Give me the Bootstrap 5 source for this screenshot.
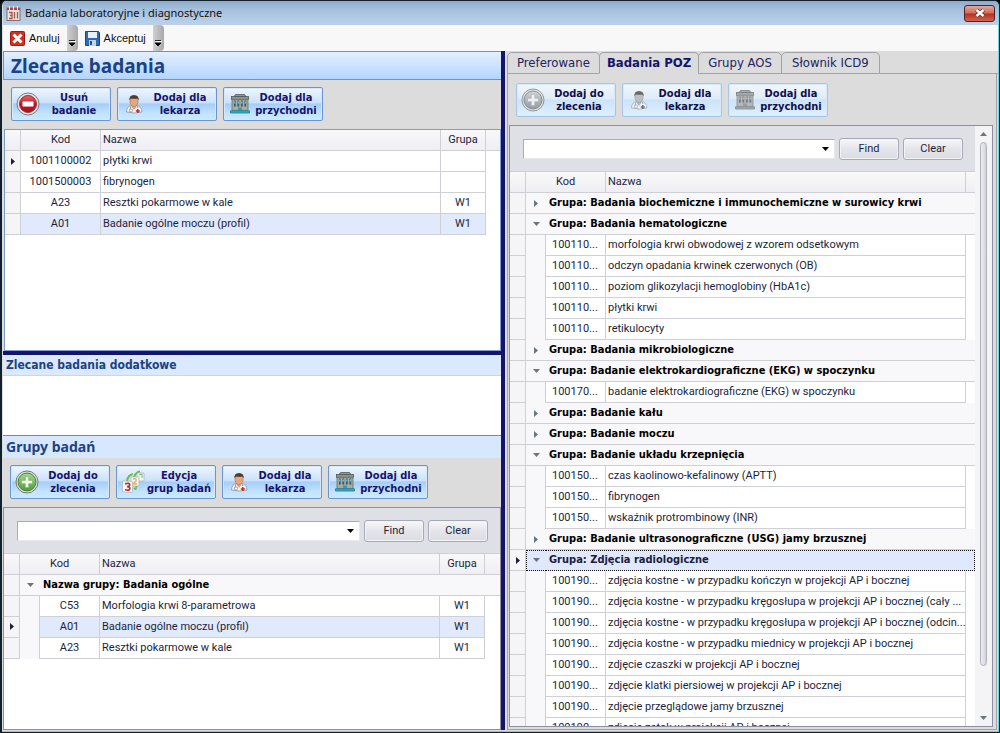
<!DOCTYPE html>
<html lang="pl">
<head>
<meta charset="utf-8">
<meta name="viewport" content="width=device-width, initial-scale=1">
<title>Badania laboratoryjne i diagnostyczne</title>
<link href="https://cdn.jsdelivr.net/npm/bootstrap@5.3.0/dist/css/bootstrap.min.css" rel="stylesheet">
<style>
:root{--navy:#14146c;--ink:#1c1f3a;--line:#cfcfd6;--bold-face:"DejaVu Sans Condensed","DejaVu Sans",sans-serif}
body{font:11px/20px Roboto,sans-serif;color:var(--ink);background:#000}
button,input{font:inherit}
.app-window{height:100vh;background:#dcdcdc;border:1px solid #10202c;border-width:1px 1px 1px 2px;border-radius:6px 6px 0 0;box-shadow:inset 0 -1px #6fd0ea,inset -1px 0 #6fd0ea;padding:0 1px 2px 1px;overflow:hidden}
.title-bar{height:24px;background:linear-gradient(#8fa9c6,#a3bedb 30%,#bcd2ea);font:11px/24px "Noto Sans",sans-serif;color:#111;padding:0 3px 0 3px}
.title-bar .ico{width:15px;height:15px}
.close-btn{width:31px;height:17px;padding:0;border:1px solid #53202a;border-radius:3px;background:linear-gradient(#e5a79c,#d0695a 48%,#b5301c 52%,#cf6551);display:flex;align-items:center;justify-content:center}
.tool-bar{height:26px;background:#f8f8f8;font:11px/26px "Liberation Sans",sans-serif}
.tool-btn{border:0;background:none;padding:0 7px 0 7px;display:flex;align-items:center;gap:4px;color:#111}
.tool-btn svg{width:15px;height:15px}
.tool-grip{width:11px;border:0;padding:0;background:linear-gradient(90deg,#d0d0d0,#a8a8a8);border-radius:0 4px 4px 0;display:flex;align-items:end;justify-content:center}
.panes{display:grid;grid-template-columns:minmax(0,498fr) 4px minmax(0,493fr);min-height:0}
.pane-col{min-height:0}
.split{background:var(--navy)}
.split-h{height:4px}
.blank-area{height:59px}
.pane-title{margin:0;color:#1b4285;font-weight:700}
.title-lg{height:29px;font:700 19px/28px "Noto Sans",sans-serif;padding-left:7px;border:1px solid #6d93cf;border-width:1px 0 1px 1px;background:linear-gradient(#e3efff,#b4d5fe)}
.title-md{height:23px;font:700 14px/22px "Noto Sans",sans-serif;padding-left:3px;background:#d7e7fd;border-top:1px solid #6b87b9}
.title-sm{height:21px;font:700 12px/20px var(--bold-face);padding-left:3px;background:#dae9fd;border-bottom:1px solid #c5d7ec}
.act-bar{display:flex;gap:6px;padding:7px 7px 8px}
.tab-body .act-bar{padding-top:9px}
.act-btn{width:100px;height:34px;display:flex;align-items:center;padding:0 2px 0 4px;border:1px solid #6a95d2;border-radius:2px;background:linear-gradient(#eef6ff,#cbe1fb 46%,#a5cdf8 50%,#c3e2ff 80%,#c9ebff);font:700 11px/13px var(--bold-face);color:var(--navy);box-shadow:inset 0 0 0 1px #d5e8fc}
.act-btn svg{width:24px;height:24px;flex:none}
.act-btn span{flex:1;text-align:center;white-space:nowrap}
.act-btn:disabled{border-color:#a9c6e6;background:linear-gradient(#f2f7fc,#dfebf7 46%,#cbe2f8 50%,#e0f1ff);color:#10104e}
.act-btn:disabled svg{filter:grayscale(1);opacity:.75}
.grid-box{flex:1 1 0;border:1px solid #8c8fa3;background:#fff;overflow:hidden;min-height:0}
.grid-blue{flex-basis:0;margin-left:1px;border-color:#7d9cd0}
.grid-low{flex-basis:4px}
.find-row{background:#dfe0e6;display:flex;align-items:center;gap:4px;padding:12px 12px 11px 13px;border-bottom:1px solid var(--line)}
.find-combo{display:flex;flex:1;min-width:0;height:20px;background:#fff;border:1px solid #a9abb8;border-right-color:#e8e8ec;border-bottom-color:#e8e8ec}
.find-combo input{flex:1;min-width:0;border:0;outline:0;padding:0 3px;background:none}
.find-combo button{border:0;background:none;width:17px;padding:0;display:flex;align-items:center;justify-content:center}
.find-btn{width:60px;height:22px;padding:0;border:1px solid #a7a9b8;border-radius:3px;background:linear-gradient(#f8f8fa,#e4e5ea 50%,#dcdde4);line-height:20px;color:var(--ink);box-shadow:inset 0 0 0 1px #f3f3f6}
.data-grid{width:100%;table-layout:fixed;border-collapse:separate;border-spacing:0}
.data-grid th,.data-grid td{height:21px;padding:0 0 0 2px;line-height:20px;vertical-align:top;border-right:1px solid var(--line);border-bottom:1px solid var(--line);white-space:nowrap;overflow:hidden}
.data-grid th{line-height:19px;font-weight:400;background:linear-gradient(#f9f9fb,#efeff3)}
.data-grid th:last-child{border-right:0}
.data-grid td:last-child:not(.grp){border:0}
.data-grid .ctr{text-align:center;padding:0}
.data-grid td:first-child{background:#f5f5f8;padding:0;text-align:center}
.data-grid .grp{border-right:0;padding-left:3px;background:#f8f8fa;font:700 11px/20px var(--bold-face);color:#000}
.data-grid .exp{background:#f8f8fa;border-right:0;padding:0;text-align:center}
.data-grid .gut{background:#f8f8fa;border-bottom:0;padding:0}
.data-grid .code{padding:0 2px 0 6px}
.data-grid svg{display:inline-block;vertical-align:middle}
.picked td:not(:first-child):not(:last-child):not(.gut){background:#e1e9fc}
.data-grid .focus-grp .exp,.data-grid .focus-grp .grp{background:#dfe8fc;border-top:1px dotted #111;border-bottom:1px dotted #111;line-height:18px;color:#20203c}
.data-grid .focus-grp .exp{border-left:1px dotted #111}
.data-grid .focus-grp .grp{border-right:1px dotted #111}
.tabs-row{border-bottom:1px solid #a2a2a8;height:22px;margin:1px 0 0 2px;padding-left:1px}
.tabs-row .tab-btn{height:22px;margin-left:-1px;padding:0 9px;border:1px solid #a2a2a8;border-radius:5px 5px 0 0;background:#dcdcdc;font:13px/20px var(--bold-face);color:#23235f;white-space:nowrap}
.tabs-row .tab-btn.active{font-weight:700;color:var(--navy);border-bottom-color:#dcdcdc;padding:0 7px}
.tabs-row .tab-btn:last-child{padding:0 10px}
.tab-body{margin:0 1px 0 2px;border:1px solid #a2a2a8;border-top:0;padding:0 3px 2px 1px;min-height:0}
.scroll-col{width:17px;background:#f4f4f7;padding:6px 0}
.scroll-thumb{width:7px;flex:1;margin:6px 0 50px;border:1px solid #b2b2bc;border-radius:4px;background:linear-gradient(90deg,#ececf0,#d2d2da)}
</style>
</head>
<body>
<svg class="position-absolute" width="0" height="0" aria-hidden="true">
  <linearGradient id="gRed" x1="0" y1="0" x2="0" y2="1"><stop offset="0" stop-color="#e8696c"/><stop offset=".5" stop-color="#c81526"/><stop offset="1" stop-color="#a80f1d"/></linearGradient>
  <linearGradient id="gGreen" x1="0" y1="0" x2="0" y2="1"><stop offset="0" stop-color="#a5d98f"/><stop offset="1" stop-color="#4e9c3d"/></linearGradient>
  <symbol id="i-minus" viewBox="0 0 24 24"><circle cx="12" cy="12" r="11" fill="#e8e8ea" stroke="#77777c"/><circle cx="12" cy="12" r="8.500" fill="url(#gRed)" stroke="#8b3038"/><rect x="6.500" y="9.500" width="11" height="5" rx="1" fill="#fff" stroke="#d9a0a4" stroke-width=".6"/></symbol>
  <symbol id="i-plus" viewBox="0 0 24 24"><circle cx="12" cy="12" r="11" fill="#e4e8e0" stroke="#6d7a68"/><circle cx="12" cy="12" r="9" fill="url(#gGreen)" stroke="#4a7a40"/><path d="M10.300 6.500h3.400v3.800h3.800v3.400h-3.800v3.800h-3.400v-3.800H6.500v-3.400h3.800z" fill="#eef8e8" stroke="#7cb06c" stroke-width=".7"/></symbol>
  <symbol id="i-doctor" viewBox="0 0 24 24"><path d="M4.500 20c0-4 2-6 5-6.500h5c3 .5 5.500 2.500 5.500 6.500q-7.500 2-15.500 0z" fill="#f4f6f8" stroke="#8b939c" stroke-width=".8"/><path d="M9.500 12.500h5l-.5 3-2 2.500-2-2.500z" fill="#e2a377"/><path d="M8 6h8V10.500q-.9 4-4 4.200Q8.800 14.500 8 10.500z" fill="#e8a87c" stroke="#9c6a48" stroke-width=".5"/><path d="M7.500 8.500q-.8-5.300 4.500-5.600 5.300.3 4.600 5.600l-1.200-2q-3.200.6-6.600 0z" fill="#4a3c36"/><path d="M9 14l-1.500 5.500M15 14l1 2" stroke="#8f98a4" fill="none"/><circle cx="9" cy="18.500" r="1.600" fill="#fff" stroke="#8b939c" stroke-width=".8"/><path d="M15.800 17v4M13.800 19h4" stroke="#d02424" stroke-width="1.500"/></symbol>
  <symbol id="i-house" viewBox="0 0 24 24"><path d="M6 4.500L7.500 2.500h9l1.500 2z" fill="#9d9484" stroke="#5b5c58" stroke-width=".8"/><rect x="3.500" y="4.500" width="17" height="2.800" fill="#8f968f" stroke="#4c5858" stroke-width=".8"/><rect x="4" y="7.300" width="16" height="11.500" fill="#b3a98f" stroke="#4d7880" stroke-width=".8"/><path d="M6.800 8.500v6M10.300 8.500v6M13.800 8.500v6M17.300 8.500v6" stroke="#1f5f8e" stroke-width="1.800"/><path d="M6.800 9.500v2M10.300 9.500v2M13.800 9.500v2M17.300 9.500v2" stroke="#7fd0ee" stroke-width="1.200"/><rect x="10" y="15.500" width="4" height="3.500" fill="#2c9cc4"/><path d="M2.500 18.800h19v2.200h-19z" fill="#38b0cc" stroke="#1e7890" stroke-width=".8"/></symbol>
  <symbol id="i-cards" viewBox="0 0 24 24"><path d="M6 11Q7 5 12 4M13 7q2-5 6-5.500" fill="none" stroke="#6bbb50" stroke-width="2"/><path d="M16 3h7v8h-7z" fill="#f4f6f6" stroke="#a5b3b8" stroke-width=".7"/><path d="M10 7h8v9h-8z" fill="#f8f8f4" stroke="#a5b3b8" stroke-width=".7"/><path d="M12 9q4-1 3 2l-3 3h4" fill="none" stroke="#e3b55c" stroke-width="1.500"/><path d="M18 5l3-1v4" fill="none" stroke="#79b66e"/><path d="M1.500 11l10 .5v11l-10-.5z" fill="#fff" stroke="#a5b3b8" stroke-width=".7"/><path d="M13 18q3 3 2-2" fill="none" stroke="#6bbb50" stroke-width="1.500"/><path d="M4 13.800q5-1.200 4.700 1Q8.500 16.500 6 16.700q3.200.2 2.900 2Q8.500 21 4 19.800" fill="none" stroke="#d02a28" stroke-width="1.700"/></symbol>
  <symbol id="i-right" viewBox="0 0 4 7"><path d="M0 0l4 3.500L0 7z" fill="currentColor"/></symbol>
  <symbol id="i-down" viewBox="0 0 7 4"><path d="M0 0h7L3.500 4z" fill="currentColor"/></symbol>
  <symbol id="i-grip" viewBox="0 0 7 7"><path d="M1 1.500h6" stroke="#fff"/><path d="M0 .5h6M0 3h6L3 6z" stroke="#000" fill="#000" stroke-width=".8"/></symbol>
</svg>
<div class="app-window d-flex flex-column">
  <header class="title-bar d-flex align-items-center">
    <svg class="ico me-1" viewBox="0 0 15 15"><rect x="1" y="2" width="13" height="12.500" fill="#e9e4e2" stroke="#8a6c68"/><path d="M1 2h13v2H1z" fill="#b8433c"/><path d="M3.500 0v4M7.500 0v4M11.500 0v4" stroke="#f5f0ee"/><path d="M3 6.500h3v6H3m3-3H4M8.500 6v6.500M11.500 6v6.500" stroke="#a4554e" fill="none" stroke-width="1.300"/></svg>
    <span class="flex-fill">Badania laboratoryjne i diagnostyczne</span>
    <button class="close-btn" type="button" aria-label="Zamknij"><svg width="12" height="10" viewBox="0 0 12 10"><path d="M2.500 2l7 6M9.500 2l-7 6" stroke="#5b2a28" stroke-width="3.800"/><path d="M2.500 2l7 6M9.500 2l-7 6" stroke="#fff" stroke-width="2.400"/></svg></button>
  </header>
  <div class="tool-bar d-flex">
    <button class="tool-btn" type="button"><svg viewBox="0 0 15 15"><rect x=".5" y=".5" width="14" height="14" rx="1" fill="#d6301c" stroke="#a01a10"/><path d="M3.500 3.500l8 8M11.500 3.500l-8 8" stroke="#fff" stroke-width="3"/></svg>Anuluj</button>
    <button class="tool-grip" type="button" aria-label="Więcej"><svg class="mb-1" width="7" height="7"><use href="#i-grip"/></svg></button>
    <button class="tool-btn" type="button"><svg viewBox="0 0 15 15"><path d="M.5.500h13l1 1v13H.5z" fill="#2f6ab8" stroke="#1c4684"/><rect x="3" y="1" width="9" height="6" fill="#e8f0fa"/><rect x="4" y="9" width="7" height="6" fill="#c4d2e4"/><rect x="5" y="10" width="2" height="4" fill="#23508e"/></svg>Akceptuj</button>
    <button class="tool-grip" type="button" aria-label="Więcej"><svg class="mb-1" width="7" height="7"><use href="#i-grip"/></svg></button>
  </div>
  <main class="panes flex-fill">
    <section class="pane-col d-flex flex-column">
      <h1 class="pane-title title-lg">Zlecane badania</h1>
      <div class="act-bar ps-2">
        <button class="act-btn" type="button"><svg><use href="#i-minus"/></svg><span>Usuń<br>badanie</span></button>
        <button class="act-btn" type="button"><svg><use href="#i-doctor"/></svg><span>Dodaj dla<br>lekarza</span></button>
        <button class="act-btn" type="button"><svg><use href="#i-house"/></svg><span>Dodaj dla<br>przychodni</span></button>
      </div>
      <div class="grid-box grid-blue">
        <table class="data-grid">
          <colgroup><col style="width:16px"><col style="width:80px"><col><col style="width:45px"><col style="width:14px"></colgroup>
          <thead><tr><th></th><th class="ctr">Kod</th><th>Nazwa</th><th class="ctr">Grupa</th><th></th></tr></thead>
          <tbody>
            <tr><td><svg width="4" height="7"><use href="#i-right"/></svg></td><td class="ctr">1001100002</td><td>płytki krwi</td><td></td><td></td></tr>
            <tr><td></td><td class="ctr">1001500003</td><td>fibrynogen</td><td></td><td></td></tr>
            <tr><td></td><td class="ctr">A23</td><td>Resztki pokarmowe w kale</td><td class="ctr">W1</td><td></td></tr>
            <tr class="picked"><td></td><td class="ctr">A01</td><td>Badanie ogólne moczu (profil)</td><td class="ctr">W1</td><td></td></tr>
          </tbody>
        </table>
      </div>
      <div class="split split-h"></div>
      <h2 class="pane-title title-sm">Zlecane badania dodatkowe</h2>
      <div class="blank-area bg-white"></div>
      <h2 class="pane-title title-md">Grupy badań</h2>
      <div class="act-bar">
        <button class="act-btn" type="button"><svg><use href="#i-plus"/></svg><span>Dodaj do<br>zlecenia</span></button>
        <button class="act-btn" type="button"><svg><use href="#i-cards"/></svg><span>Edycja<br>grup badań</span></button>
        <button class="act-btn" type="button"><svg><use href="#i-doctor"/></svg><span>Dodaj dla<br>lekarza</span></button>
        <button class="act-btn" type="button"><svg><use href="#i-house"/></svg><span>Dodaj dla<br>przychodni</span></button>
      </div>
      <div class="grid-box grid-low">
        <div class="find-row">
          <div class="find-combo"><input type="text" aria-label="Szukaj grupy"><button type="button" aria-label="Rozwiń"><svg width="7" height="4"><use href="#i-down"/></svg></button></div>
          <button class="find-btn" type="button">Find</button><button class="find-btn" type="button">Clear</button>
        </div>
        <table class="data-grid">
          <colgroup><col style="width:16px"><col style="width:20px"><col style="width:60px"><col><col style="width:45px"><col style="width:15px"></colgroup>
          <thead><tr><th></th><th colspan="2" class="ctr">Kod</th><th>Nazwa</th><th class="ctr">Grupa</th><th></th></tr></thead>
          <tbody>
            <tr><td></td><td class="exp text-secondary"><svg width="7" height="4"><use href="#i-down"/></svg></td><td class="grp" colspan="4">Nazwa grupy: Badania ogólne</td></tr>
            <tr><td></td><td class="gut"></td><td class="ctr">C53</td><td>Morfologia krwi 8-parametrowa</td><td class="ctr">W1</td><td></td></tr>
            <tr class="picked"><td><svg width="4" height="7"><use href="#i-right"/></svg></td><td class="gut"></td><td class="ctr">A01</td><td>Badanie ogólne moczu (profil)</td><td class="ctr">W1</td><td></td></tr>
            <tr><td></td><td class="gut"></td><td class="ctr">A23</td><td>Resztki pokarmowe w kale</td><td class="ctr">W1</td><td></td></tr>
          </tbody>
        </table>
      </div>
    </section>
    <div class="split"></div>
    <section class="pane-col d-flex flex-column">
      <div class="tabs-row d-flex" role="tablist">
        <button class="tab-btn" type="button" role="tab">Preferowane</button>
        <button class="tab-btn active" type="button" role="tab" aria-selected="true">Badania POZ</button>
        <button class="tab-btn" type="button" role="tab">Grupy AOS</button>
        <button class="tab-btn" type="button" role="tab">Słownik ICD9</button>
      </div>
      <div class="tab-body flex-fill d-flex flex-column">
        <div class="act-bar">
          <button class="act-btn" type="button" disabled><svg><use href="#i-plus"/></svg><span>Dodaj do<br>zlecenia</span></button>
          <button class="act-btn" type="button" disabled><svg><use href="#i-doctor"/></svg><span>Dodaj dla<br>lekarza</span></button>
          <button class="act-btn" type="button" disabled><svg><use href="#i-house"/></svg><span>Dodaj dla<br>przychodni</span></button>
        </div>
        <div class="grid-box d-flex">
          <div class="flex-fill overflow-hidden">
            <div class="find-row">
              <div class="find-combo"><input type="text" aria-label="Szukaj badania"><button type="button" aria-label="Rozwiń"><svg width="7" height="4"><use href="#i-down"/></svg></button></div>
              <button class="find-btn" type="button">Find</button><button class="find-btn" type="button">Clear</button>
            </div>
            <table class="data-grid" id="catalog">
              <colgroup><col style="width:16px"><col style="width:20px"><col style="width:60px"><col><col style="width:9px"></colgroup>
              <thead><tr><th></th><th colspan="2" class="ctr">Kod</th><th>Nazwa</th><th></th></tr></thead>
              <tbody></tbody>
            </table>
          </div>
          <div class="scroll-col flex-shrink-0 d-flex flex-column align-items-center text-secondary"><svg width="7" height="4" viewBox="0 0 7 4"><path d="M0 4h7L3.500 0z" fill="currentColor"/></svg><div class="scroll-thumb"></div><svg width="7" height="4"><use href="#i-down"/></svg></div>
        </div>
      </div>
    </section>
  </main>
</div>
<script src="https://cdn.jsdelivr.net/npm/bootstrap@5.3.0/dist/js/bootstrap.bundle.min.js"></script>
<script>
// Catalogue groups: name, whether the group holds the focus, short code shown in its rows, examinations.
const catalog = [
  ["Badania biochemiczne i immunochemiczne w surowicy krwi", false, "", []],
  ["Badania hematologiczne", false, "100110...", [
    "morfologia krwi obwodowej z wzorem odsetkowym",
    "odczyn opadania krwinek czerwonych (OB)",
    "poziom glikozylacji hemoglobiny (HbA1c)",
    "płytki krwi",
    "retikulocyty"]],
  ["Badania mikrobiologiczne", false, "", []],
  ["Badanie elektrokardiograficzne (EKG) w spoczynku", false, "100170...", [
    "badanie elektrokardiograficzne (EKG) w spoczynku"]],
  ["Badanie kału", false, "", []],
  ["Badanie moczu", false, "", []],
  ["Badanie układu krzepnięcia", false, "100150...", [
    "czas kaolinowo-kefalinowy (APTT)",
    "fibrynogen",
    "wskaźnik protrombinowy (INR)"]],
  ["Badanie ultrasonograficzne (USG) jamy brzusznej", false, "", []],
  ["Zdjęcia radiologiczne", true, "100190...", [
    "zdjęcia kostne - w przypadku kończyn w projekcji AP i bocznej",
    "zdjęcia kostne - w przypadku kręgosłupa w projekcji AP i bocznej (cały ...",
    "zdjęcia kostne - w przypadku kręgosłupa w projekcji AP i bocznej (odcin...",
    "zdjęcia kostne - w przypadku miednicy w projekcji AP i bocznej",
    "zdjęcie czaszki w projekcji AP i bocznej",
    "zdjęcie klatki piersiowej w projekcji AP i bocznej",
    "zdjęcie przeglądowe jamy brzusznej",
    "zdjęcie zatok w projekcji AP i bocznej"]]
];
const right = '<svg width="4" height="7"><use href="#i-right"/></svg>';
const down = '<svg width="7" height="4"><use href="#i-down"/></svg>';
document.querySelector("#catalog tbody").innerHTML = catalog.map(([name, focus, code, items]) =>
  `<tr class="${focus ? "focus-grp" : ""}"><td>${focus ? right : ""}</td><td class="exp text-secondary">${items.length ? down : right}</td><td class="grp" colspan="3">Grupa: ${name}</td></tr>` +
  items.map(title => `<tr><td></td><td class="gut"></td><td class="code">${code}</td><td>${title}</td><td></td></tr>`).join("")
).join("");
</script>
</body>
</html>
